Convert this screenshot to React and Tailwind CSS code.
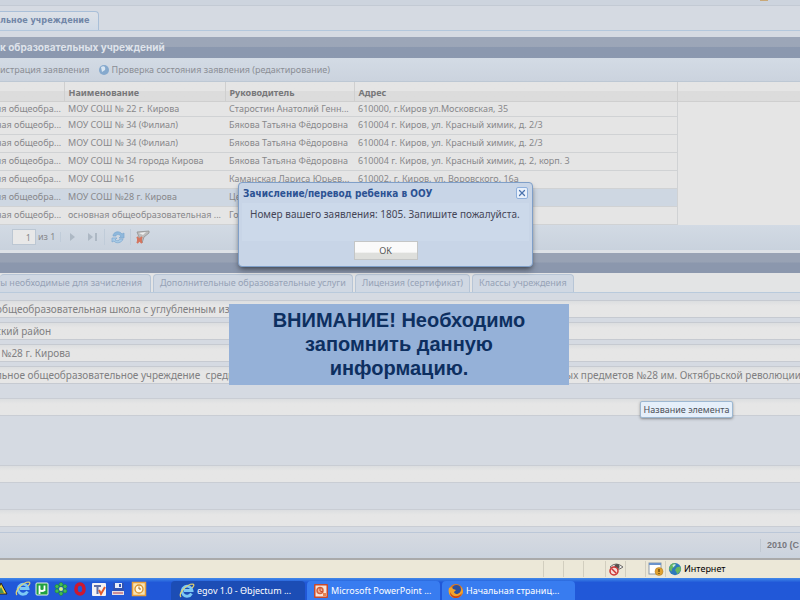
import { X } from 'lucide-react'

const schools = [
  { type: 'яя общеобра...', name: 'МОУ СОШ № 22 г. Кирова', head: 'Старостин Анатолий Генн...', address: '610000, г.Киров ул.Московская, 35' },
  { type: 'ная общеобр...', name: 'МОУ СОШ № 34 (Филиал)', head: 'Бякова Татьяна Фёдоровна', address: '610004 г. Киров, ул. Красный химик, д. 2/3' },
  { type: 'ная общеобр...', name: 'МОУ СОШ № 34 (Филиал)', head: 'Бякова Татьяна Фёдоровна', address: '610004 г. Киров, ул. Красный химик, д. 2/3' },
  { type: 'яя общеобра...', name: 'МОУ СОШ № 34 города Кирова', head: 'Бякова Татьяна Фёдоровна', address: '610004 г. Киров, ул. Красный химик, д. 2, корп. 3' },
  { type: 'яя общеобра...', name: 'МОУ СОШ №16', head: 'Каманская Лариса Юрьев...', address: '610002, г. Киров, ул. Воровского, 16а' },
  { type: 'яя общеобра...', name: 'МОУ СОШ №28 г. Кирова', head: 'Це', address: '', selected: true },
  { type: 'ная общеобр...', name: 'основная общеобразовательная ...', head: 'Го', address: '' },
]

const fields = [
  { label: 'Вид учреждения', value: 'общеобразовательная школа с углубленным изучением' },
  { label: 'Район', value: 'ский район' },
  { label: 'Краткое название', value: '  №28 г. Кирова' },
  {
    label: 'Полное название',
    value:
      'льное общеобразовательное учреждение  средняя общеобразовательная школа с углубленным изучением отдельных предметов №28 им. Октябрьской революции',
  },
]

const detailTabs = [
  'ты необходимые для зачисления',
  'Дополнительные образовательные услуги',
  'Лицензия (сертификат)',
  'Классы учреждения',
]

function IeIcon() {
  return (
    <svg viewBox="0 0 16 16" className="size-4 shrink-0">
      <path d="M12.5 10.5A5 5 0 1 1 13 7.500H5" fill="none" stroke="#7cc8f5" strokeWidth="2.800" />
      <path d="M2 14C-1 11 7 1 14 1c2 1 0 3-1 4" fill="none" stroke="#e8d36a" strokeWidth="1.200" />
    </svg>
  )
}

function RefreshIcon() {
  return (
    <svg viewBox="0 0 16 16" className="size-4">
      <path d="M3 7c0-4 6-6 9-2l2-1v5H9l2-2C9 5 6 5 6 7Z" fill="#8fb8dc" stroke="#7ba8d0" strokeWidth=".7" />
      <path d="M13 10c-1 4-7 5-9 2l-2 1V9h5l-2 2c2 1 4 1 5-1Z" fill="#a9cbe6" stroke="#7ba8d0" strokeWidth=".7" />
    </svg>
  )
}

function FilterIcon() {
  return (
    <svg viewBox="0 0 16 16" className="size-4">
      <path d="m2 3 12-1v2l-5 4-2 6-3-6Z" fill="#bdbdbd" stroke="#929292" strokeWidth=".8" />
      <path d="m4 4 7-1-3 3Z" fill="#eee" />
      <path d="m2 8 5 6M7 8l-5 6M2 11h5" stroke="#d4755f" strokeWidth="2" />
    </svg>
  )
}

function QuickLaunch() {
  return (
    <div className="flex items-center gap-[3px] shrink-0">
      <svg viewBox="0 0 12 16" className="h-4 w-3">
        <path d="M-4 13 1 2l6 11Z" fill="#f0d332" stroke="#222" />
        <path d="M-2 12 1 6l3 6Z" fill="#43925b" />
      </svg>
      <IeIcon />
      <svg viewBox="0 0 16 16" className="size-4">
        <rect x="2" y="2" width="12" height="12" rx="1" fill="#21a041" stroke="#e6f3e5" />
        <path d="M5.500 13V4.500V8q0 2 2.500 2t2.500-2V4.500V10" fill="none" stroke="#fff" strokeWidth="1.800" />
      </svg>
      <svg viewBox="0 0 16 16" className="size-4">
        <g fill="#41bd50" stroke="#17802c" strokeWidth=".5">
          <circle cx="8" cy="3.500" r="2" />
          <circle cx="12" cy="5.500" r="2" />
          <circle cx="12" cy="10" r="2" />
          <circle cx="8" cy="12.500" r="2" />
          <circle cx="4" cy="10" r="2" />
          <circle cx="4" cy="5.500" r="2" />
        </g>
        <circle cx="8" cy="8" r="2" fill="#d5f28a" />
      </svg>
      <svg viewBox="0 0 16 16" className="size-4">
        <ellipse cx="8" cy="8" rx="4" ry="5" fill="none" stroke="#cc1830" strokeWidth="3.600" />
      </svg>
      <svg viewBox="0 0 16 16" className="size-4">
        <rect x="1" y="2" width="14" height="13" rx="1" fill="#f3f1f4" />
        <path d="M3 5h7M6.500 5v8" stroke="#5f6fa8" strokeWidth="2" />
        <path d="m8 9 2 4 4-7" fill="none" stroke="#e2592b" strokeWidth="2" />
      </svg>
      <svg viewBox="0 0 16 16" className="size-4">
        <path d="M3 2h11v8H3Z" fill="#3053b4" />
        <path d="M5 2h7v5H5Z" fill="#e9edf8" />
        <path d="M9 3h2v3H9Z" fill="#3053b4" />
        <path d="M2 10h12v4H2Z" fill="#e4dfe4" />
        <path d="M3 12h10" stroke="#b33c4a" />
      </svg>
      <svg viewBox="0 0 16 16" className="ml-0.5 size-4">
        <rect x="1.500" y="1.500" width="13" height="13" fill="#f6e3b5" stroke="#e9a03c" strokeWidth="1.500" />
        <circle cx="8" cy="8" r="4" fill="#fff8e4" stroke="#d8912c" strokeWidth="1.300" />
        <path d="M8 5.500V8h2" fill="none" stroke="#a56818" />
      </svg>
    </div>
  )
}

function PowerPointIcon() {
  return (
    <svg viewBox="0 0 16 16" className="size-4 shrink-0">
      <rect x="1" y="1" width="14" height="14" rx="1" fill="#c9492b" />
      <rect x="2.500" y="2.500" width="11" height="11" fill="#f8e3d7" />
      <circle cx="7" cy="7.500" r="3" fill="#f3b193" stroke="#d4623c" strokeWidth="1.500" />
      <path d="M7 4v4l3 1" fill="none" stroke="#cb4a27" />
      <path d="M10 10h3v3h-3Z" fill="#e8834e" />
    </svg>
  )
}

function FirefoxIcon() {
  return (
    <svg viewBox="0 0 16 16" className="size-4 shrink-0">
      <circle cx="8" cy="8" r="7" fill="#e2761b" />
      <circle cx="8.500" cy="6.500" r="4.500" fill="#2b4f9f" />
      <path d="M1 5c2-1 3-1 4 1l3 1-2 2c1 3 5 3 7-1 1-2 0-4-1-5 4 3 4 9-1 11-6 3-12-2-10-9Z" fill="#f2a32c" />
      <path d="M2 9c2 5 8 6 12 1-1 4-4 5-6 5-3 0-6-2-6-6Z" fill="#c9431b" />
    </svg>
  )
}

function BlankField({ label, className }) {
  return (
    <input
      aria-label={label}
      className={`block w-full h-[18px] border-y border-[#c9cdd4] bg-linear-to-b from-[#dcdee0] to-[#e6e6e6] to-30% ${className}`}
    />
  )
}

export default function App() {
  return (
    <div className="relative min-h-screen flex flex-col overflow-hidden bg-[#d5dae2] text-[#88888b] font-['Noto_Sans',sans-serif] text-[9px]">
      <header className="h-[6px] flex justify-end pr-8 bg-[#cdd4de] border-b border-[#c3cad4]">
        <span className="w-2 h-px bg-[#c8a878]" />
      </header>

      <nav className="h-[25px] flex items-end border-b border-[#b3c7dc]">
        <button className="h-[19px] pr-2 border border-l-0 border-b-0 border-[#a9bfd8] rounded-tr-sm bg-linear-to-b from-[#dde1e7] to-[#d0dae7] font-['DejaVu_Sans_Condensed','DejaVu_Sans',sans-serif] font-bold text-[9px] text-[#7186a8]">
          льное учреждение
        </button>
      </nav>

      <section className="pt-1.5">
        <h1 className="h-[21px] flex items-center bg-linear-to-b from-[#9ca6b8] from-45% to-[#8b98af] to-50% font-['Inter',sans-serif] font-bold text-[10px] text-[#dfe3ea]">
          к образовательных учреждений
        </h1>
        <div className="h-6 flex items-center gap-2 bg-linear-to-b from-[#d3dbe5] to-[#cbd3de] border-b border-[#bdc8d4] text-[#8b8e95]">
          <button>истрация заявления</button>
          <button className="flex items-center gap-0.5">
            <svg viewBox="0 0 12 12" className="size-3">
              <circle cx="6" cy="6" r="5" fill="#86a9cd" />
              <path d="M3 3c3-2 5 0 4 3L4 8Z" fill="#d9e6f2" />
            </svg>
            Проверка состояния заявления (редактирование)
          </button>
        </div>

        <table className="w-full table-fixed border-collapse bg-[#e5e5e5] whitespace-nowrap">
          <colgroup>
            <col className="w-16" />
            <col className="w-[161px]" />
            <col className="w-[129px]" />
            <col className="w-[323px]" />
            <col />
          </colgroup>
          <thead>
            <tr className="h-[19px] bg-linear-to-b from-[#e5e5e5] from-45% to-[#dcdcdc] to-50% text-left text-[#777779] leading-[14px]">
              <th className="p-0 border-r border-b border-[#cfcfcf]" />
              <th className="px-1 pt-[3px] pb-0 border-r border-b border-[#cfcfcf]">Наименование</th>
              <th className="px-1 pt-[3px] pb-0 border-r border-b border-[#cfcfcf]">Руководитель</th>
              <th className="px-1 pt-[3px] pb-0 border-r border-b border-[#cfcfcf]">Адрес</th>
              <th className="p-0 border-b border-[#cfcfcf]" />
            </tr>
          </thead>
          <tbody className="leading-[12px]">
            {schools.map((s, i) => (
              <tr key={i} className={i === 0 ? 'h-[15px]' : s.selected ? 'h-[18px] bg-[#ced7e2]' : 'h-[18px]'}>
                <td className="p-0 -indent-1 border-b border-[#d0d2d4]">{s.type}</td>
                <td className="px-1 py-0 border-b border-[#d0d2d4]">{s.name}</td>
                <td className="px-1 py-0 border-b border-[#d0d2d4]">{s.head}</td>
                <td className="px-1 py-0 border-b border-r border-[#d0d2d4]">{s.address}</td>
                <td className="p-0 bg-[#e5e5e5]" />
              </tr>
            ))}
          </tbody>
        </table>

        <div className="h-[25px] flex items-center pl-3 bg-linear-to-b from-[#d2dae4] to-[#c9d2dd]">
          <input
            aria-label="Страница"
            defaultValue="1"
            className="w-6 h-4 pr-1 text-right bg-[#e8e8e8] border border-[#bcc7d3]"
          />
          <span className="pl-0.5 w-6">из 1</span>
          <button aria-label="Следующая" className="w-6 flex justify-center border-l border-[#c0ccd9]">
            <svg viewBox="0 0 8 10" className="w-2 h-2.5">
              <path d="M1 1v8l5-4Z" fill="#adb8c4" />
            </svg>
          </button>
          <button aria-label="Последняя" className="w-4 flex justify-center">
            <svg viewBox="0 0 10 10" className="size-2.5">
              <path d="M1 1v8l5-4ZM8 1h2v8H8Z" fill="#adb8c4" />
            </svg>
          </button>
          <button aria-label="Обновить" className="ml-1 w-[26px] flex justify-center border-l border-[#c0ccd9]">
            <RefreshIcon />
          </button>
          <button aria-label="Фильтр" className="w-6 flex justify-center border-l border-[#c0ccd9]">
            <FilterIcon />
          </button>
        </div>
      </section>

      <section className="flex-1 border-t-3 border-[#dde1e6]">
        <div className="h-5 bg-linear-to-b from-[#98a2b4] from-45% to-[#8b97ad] to-50%" />
        <div className="h-5 flex items-end gap-0.5 bg-[#e3e4e5] border-b border-[#b9cadc]">
          {detailTabs.map((tab, i) => (
            <button
              key={tab}
              className={`h-[18px] whitespace-nowrap border-r border-t border-[#b7c5d6] rounded-t-sm bg-[#d0d8e3] text-[#96a2b6] ${i ? 'px-1.5 border-l' : '-indent-1 pr-2'}`}
            >
              {tab}
            </button>
          ))}
        </div>
        <form className="pt-[7px] text-[10px] text-[#808082]">
          <div className="flex flex-col gap-1">
            {fields.map((f) => (
              <input
                key={f.label}
                aria-label={f.label}
                defaultValue={f.value}
                className="block -ml-1 w-full min-w-[810px] h-[18px] border-y border-[#c6cad1] bg-linear-to-b from-[#dcdee0] to-[#e6e6e6] to-30%"
              />
            ))}
          </div>
          <BlankField label="Адрес" className="mt-3.5" />
          <BlankField label="Телефон" className="mt-[49px]" />
          <BlankField label="Сайт" className="mt-[26px]" />
        </form>
      </section>

      <footer className="h-[26px] flex items-center justify-end bg-linear-to-b from-[#d6dae1] to-[#cbd3de] border-t border-[#bbc7d8] font-['Liberation_Sans',Arial,sans-serif] font-bold text-[9px] text-[#77777d]">
        <span className="w-10 pl-1.5 border-l border-[#c0c8d2] whitespace-nowrap">2010 (C</span>
      </footer>

      <div className="h-5 flex items-center justify-end border-t-2 border-[#aaaaaa] bg-[#ece8d8] text-black">
        <span className="w-5 h-4 border-l border-[#d2cebf]" />
        <span className="w-5 h-4 border-l border-[#d2cebf]" />
        <span className="w-[22px] h-4 border-l border-[#d2cebf]" />
        <span className="w-5 h-4 pl-0.5 border-l border-[#d2cebf]">
          <svg viewBox="0 0 16 16" className="size-4">
            <path d="M2 6q6-6 13 0-6 5-13 0Z" fill="#eee" stroke="#6e6a66" />
            <circle cx="9" cy="5.500" r="2.500" fill="#55504e" />
            <circle cx="6" cy="10" r="4" fill="#f7dcd8" stroke="#cc3434" strokeWidth="1.500" />
            <path d="m3.500 7.500 5 5" stroke="#cc3434" strokeWidth="1.500" />
          </svg>
        </span>
        <span className="w-5 h-4 border-l border-[#d2cebf]" />
        <span className="w-5 h-4 pl-0.5 border-l border-[#d2cebf]">
          <svg viewBox="0 0 16 16" className="size-4">
            <rect x="1" y="2" width="12" height="11" fill="#fff" stroke="#8a98a8" />
            <path d="M1 3h12" stroke="#6b93cb" strokeWidth="2" />
            <circle cx="11" cy="10.500" r="4" fill="#e0a12f" stroke="#ab7820" strokeWidth=".5" />
            <path d="M11 8v3m0 1v1" stroke="#654309" strokeWidth="1.300" />
          </svg>
        </span>
        <span className="w-[135px] h-4 pl-0.5 flex items-center gap-0.5 border-l border-[#d2cebf]">
          <svg viewBox="0 0 16 16" className="size-3.5">
            <circle cx="8" cy="8" r="7" fill="#2d79bb" />
            <path d="M3 3c3-2 5-2 6 0l-2 3-2 1-1 4-3-3Zm7 3 4-1 1 4-4 5-3-5Z" fill="#67b761" />
            <path d="M5 4q2-2 4-1L6 6Z" fill="#c3e9ef" />
          </svg>
          Интернет
        </span>
      </div>

      <div className="h-[22px] flex items-center bg-linear-to-b from-[#4389ea] to-[#2158d8] to-20% text-white">
        <QuickLaunch />
        <div className="ml-6 flex self-end gap-0.5">
          <button className="w-[134px] h-[19px] pl-2 flex items-center gap-0.5 rounded-t-sm bg-[#1c4db5] whitespace-nowrap">
            <IeIcon />
            egov 1.0 - Өbjectum ...
          </button>
          <button className="w-[133px] h-[19px] pl-1.5 flex items-center gap-0.5 rounded-t-sm bg-[#387cf0] whitespace-nowrap">
            <PowerPointIcon />
            Microsoft PowerPoint ...
          </button>
          <button className="w-[133px] h-[19px] pl-1.5 flex items-center gap-0.5 rounded-t-sm bg-[#387cf0] whitespace-nowrap">
            <FirefoxIcon />
            Начальная страниц...
          </button>
        </div>
      </div>

      <div
        role="dialog"
        aria-labelledby="dialog-title"
        className="absolute left-[238px] top-[182px] w-[295px] h-[85px] flex flex-col items-center pb-1.5 rounded-sm border border-[#7f9fc8] bg-[#c8d5e7] shadow-md shadow-[#00000060]"
      >
        <div className="w-full h-5 px-1 flex items-center justify-between">
          <h2 id="dialog-title" className="font-['DejaVu_Sans_Condensed','DejaVu_Sans',sans-serif] font-bold text-[10px] text-[#2c5293]">
            Зачисление/перевод ребенка в ООУ
          </h2>
          <button aria-label="Закрыть" className="size-3 flex items-center justify-center rounded-xs bg-[#e8f0fb] border border-[#8fb0dc] text-[#4c74ae]">
            <X size={10} strokeWidth={3} />
          </button>
        </div>
        <p className="flex-1 w-[287px] px-2 pt-1 bg-[#ccd9ea] text-[10px] text-[#454657] whitespace-nowrap">
          Номер вашего заявления: 1805. Запишите пожалуйста.
        </p>
        <button className="w-16 h-[19px] border border-[#c4c6c6] bg-linear-to-b from-[#fafafa] from-60% to-[#dedfdc] to-65% text-[#555]">
          OK
        </button>
      </div>

      <div className="absolute left-[229px] top-[304px] w-[340px] h-[81px] px-8 pt-1 bg-[#95b1d8] text-center font-['Liberation_Sans',Arial,sans-serif] font-bold text-[20px] leading-6 text-[#0d2f60]">
        ВНИМАНИЕ! Необходимо запомнить данную информацию.
      </div>

      <div
        role="tooltip"
        className="absolute left-[640px] top-[401px] w-[93px] h-[17px] flex items-center justify-center rounded-xs border border-[#9db8d2] bg-[#e5effa] shadow-sm shadow-[#00000050] text-[#4c4f58] whitespace-nowrap"
      >
        Название элемента
      </div>
    </div>
  )
}
